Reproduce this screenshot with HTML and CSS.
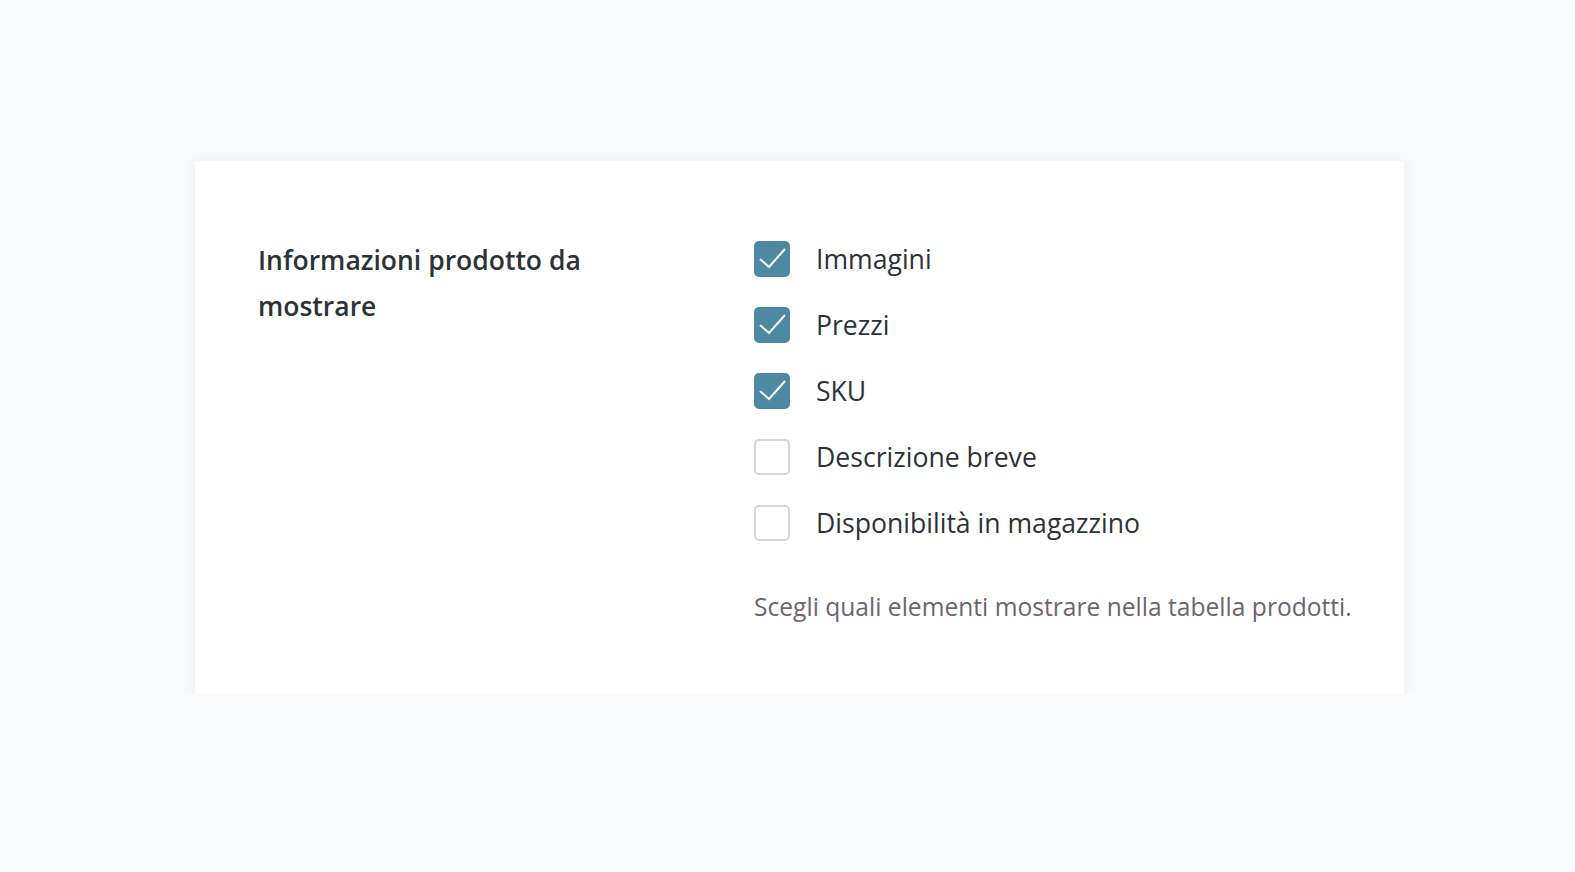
FILE: index.html
```html
<!DOCTYPE html>
<html lang="it">
<head>
    <meta charset="UTF-8">
    <meta name="viewport" content="width=device-width, initial-scale=1.0">
    <title>Impostazioni tabella prodotti</title>
    <link rel="stylesheet" href="styles.css">
</head>
<body>

    <!-- scheda impostazioni -->
    <div class="card">
        <div class="field-label">Informazioni prodotto da mostrare</div>

        <div class="field-body">
            <ul class="options">
                <li>
                    <span class="box checked">
                        <svg viewBox="0 0 36 36"><path d="M6 18 L15 26 L31 8"/></svg>
                    </span>
                    <span class="option-text">Immagini</span>
                </li>
                <li>
                    <span class="box checked">
                        <svg viewBox="0 0 36 36"><path d="M6 18 L15 26 L31 8"/></svg>
                    </span>
                    <span class="option-text">Prezzi</span>
                </li>
                <li>
                    <span class="box checked">
                        <svg viewBox="0 0 36 36"><path d="M6 18 L15 26 L31 8"/></svg>
                    </span>
                    <span class="option-text">SKU</span>
                </li>
                <li>
                    <span class="box"></span>
                    <span class="option-text">Descrizione breve</span>
                </li>
                <li>
                    <span class="box"></span>
                    <span class="option-text">Disponibilità in magazzino</span>
                </li>
            </ul>

            <p class="help">Scegli quali elementi mostrare nella tabella prodotti.</p>
        </div>
    </div>

</body>
</html>
```

FILE: styles.css
```css
body {
    font-family: 'Open Sans', 'Noto Sans', sans-serif;
    background-color: #f9fafb;
    margin: 0;
    padding: 161px 171px 0 195px;
}

.card {
    background-color: #fff;
    box-shadow: 0 0 16px rgba(120, 150, 170, 0.12);
    padding: 76px 52px 71px 63px;
    display: flex;
}

.field-label {
    width: 370px;
    margin-right: 126px;
    font-size: 26.5px;
    font-weight: 600;
    line-height: 46px;
    color: #2c3238;
}

.field-body {
    flex: 1;
}

.options {
    list-style: none;
    margin: 4px 0 0;
    padding: 0;
    display: flex;
    flex-direction: column;
    gap: 30px;
}

.options li {
    display: flex;
    align-items: center;
    height: 36px;
}

.box {
    width: 32px;
    height: 32px;
    border: 2px solid #d6d6d6;
    border-radius: 5px;
    margin-right: 26px;
    display: flex;
}

.box.checked {
    background-color: #4d89a2;
    border-color: #4d89a2;
}

.box svg {
    width: 36px;
    height: 36px;
    margin: -2px;
    fill: none;
    stroke: #fff;
    stroke-width: 2;
}

.option-text {
    font-size: 26.6px;
    color: #2c3238;
}

.help {
    margin: 50px 0 0;
    font-size: 24.6px;
    line-height: 32px;
    white-space: nowrap;
    color: #6d6470;
}
```
